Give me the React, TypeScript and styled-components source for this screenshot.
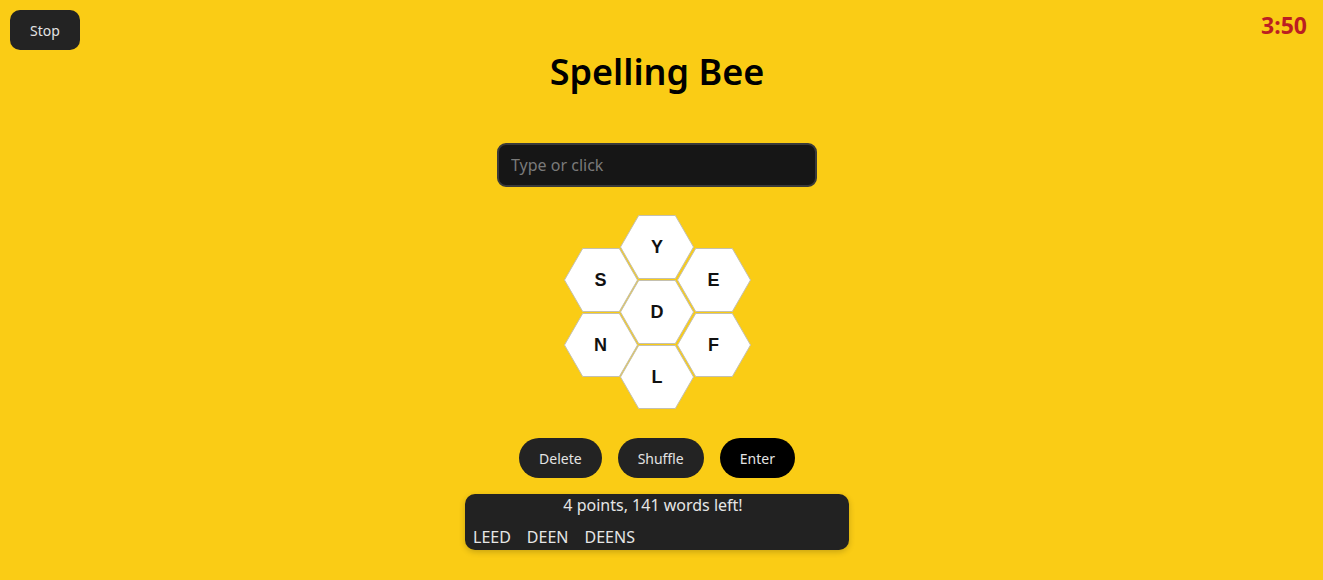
import React from "react";
import styled, { createGlobalStyle } from "styled-components";

const GlobalStyle = createGlobalStyle`
  html, body {
    margin: 0;
    padding: 0;
    background: #facc15;
    font-family: "Noto Sans", "Open Sans", sans-serif;
  }
  * { box-sizing: border-box; }
`;

const Page = styled.div`
  position: relative;
  width: 1314px;
  min-height: 580px;
  display: flex;
  flex-direction: column;
  align-items: center;
  padding-top: 44px;
`;

const CornerButton = styled.button`
  position: absolute;
  top: 10px;
  left: 10px;
  width: 70px;
  height: 40px;
  border: none;
  border-radius: 10px;
  background: #232323;
  color: #e2e2e2;
  font-family: "Noto Sans", sans-serif;
  font-size: 14px;
  cursor: pointer;
`;

const Timer = styled.div`
  position: absolute;
  top: 9px;
  right: 7px;
  color: #bb1e22;
  font-weight: 700;
  font-size: 23px;
  line-height: 32px;
`;

const Title = styled.h1`
  margin: 0;
  font-size: 36px;
  font-weight: 600;
  line-height: 56px;
  color: #000;
`;

const WordInput = styled.input`
  margin-top: 43px;
  width: 320px;
  height: 44px;
  background: #161616;
  border: 2px solid #3a3a3a;
  border-radius: 9px;
  padding: 0 12px;
  color: #eee;
  font-family: "Noto Sans", sans-serif;
  font-size: 16px;
  outline: none;
  &::placeholder {
    color: #7a7a7a;
  }
`;

const Hive = styled.div`
  position: relative;
  margin-top: 28px;
  width: 187px;
  height: 194px;
`;

const Cell = styled.button<{ $x: number; $y: number }>`
  position: absolute;
  left: ${(p) => p.$x}px;
  top: ${(p) => p.$y}px;
  width: 74px;
  height: 64px;
  padding: 0;
  border: none;
  background: transparent;
  cursor: pointer;
  display: flex;
  align-items: center;
  justify-content: center;
`;

const CellShape = styled.svg`
  position: absolute;
  inset: 0;
`;

const CellLetter = styled.span`
  position: relative;
  font-family: "Liberation Sans", Arial, sans-serif;
  font-weight: 700;
  font-size: 18px;
  color: #111;
`;

const Actions = styled.div`
  margin-top: 29px;
  display: flex;
  gap: 16px;
`;

const Pill = styled.button<{ $primary?: boolean }>`
  height: 40px;
  padding: 0 20px;
  border: none;
  border-radius: 20px;
  background: ${(p) => (p.$primary ? "#000" : "#232323")};
  color: #e4e4e4;
  font-family: "Noto Sans", sans-serif;
  font-size: 14px;
  cursor: pointer;
`;

const Found = styled.div`
  margin-top: 16px;
  width: 384px;
  height: 56px;
  background: #222;
  border-radius: 10px;
  box-shadow: 0 2px 6px rgba(0, 0, 0, 0.2);
  color: #e6e6e6;
  font-size: 16px;
  padding: 0 8px;
`;

const Score = styled.div`
  text-align: center;
  line-height: 22px;
  padding-right: 8px;
`;

const WordList = styled.div`
  margin-top: 10px;
  display: flex;
  gap: 16px;
  line-height: 22px;
`;

const cells = [
  { l: "Y", x: 56.5, y: 0 },
  { l: "S", x: 0, y: 33 },
  { l: "E", x: 113, y: 33 },
  { l: "D", x: 56.5, y: 65 },
  { l: "N", x: 0, y: 98 },
  { l: "F", x: 113, y: 98 },
  { l: "L", x: 56.5, y: 130 },
];

export default function App() {
  return (
    <>
      <GlobalStyle />
      <Page>
        <CornerButton>Stop</CornerButton>
        <Timer>3:50</Timer>
        <Title>Spelling Bee</Title>
        <WordInput placeholder="Type or click" />
        <Hive>
          {cells.map((c) => (
            <Cell key={c.l} $x={c.x} $y={c.y}>
              <CellShape width="74" height="64" viewBox="0 0 74 64">
                <polygon
                  points="18.7,0.5 55.3,0.5 73.5,32 55.3,63.5 18.7,63.5 0.5,32"
                  fill="#fff"
                  stroke="#c4c0b0"
                  strokeWidth="1"
                />
              </CellShape>
              <CellLetter>{c.l}</CellLetter>
            </Cell>
          ))}
        </Hive>
        <Actions>
          <Pill>Delete</Pill>
          <Pill>Shuffle</Pill>
          <Pill $primary>Enter</Pill>
        </Actions>
        <Found>
          <Score>4 points, 141 words left!</Score>
          <WordList>
            <span>LEED</span>
            <span>DEEN</span>
            <span>DEENS</span>
          </WordList>
        </Found>
      </Page>
    </>
  );
}
